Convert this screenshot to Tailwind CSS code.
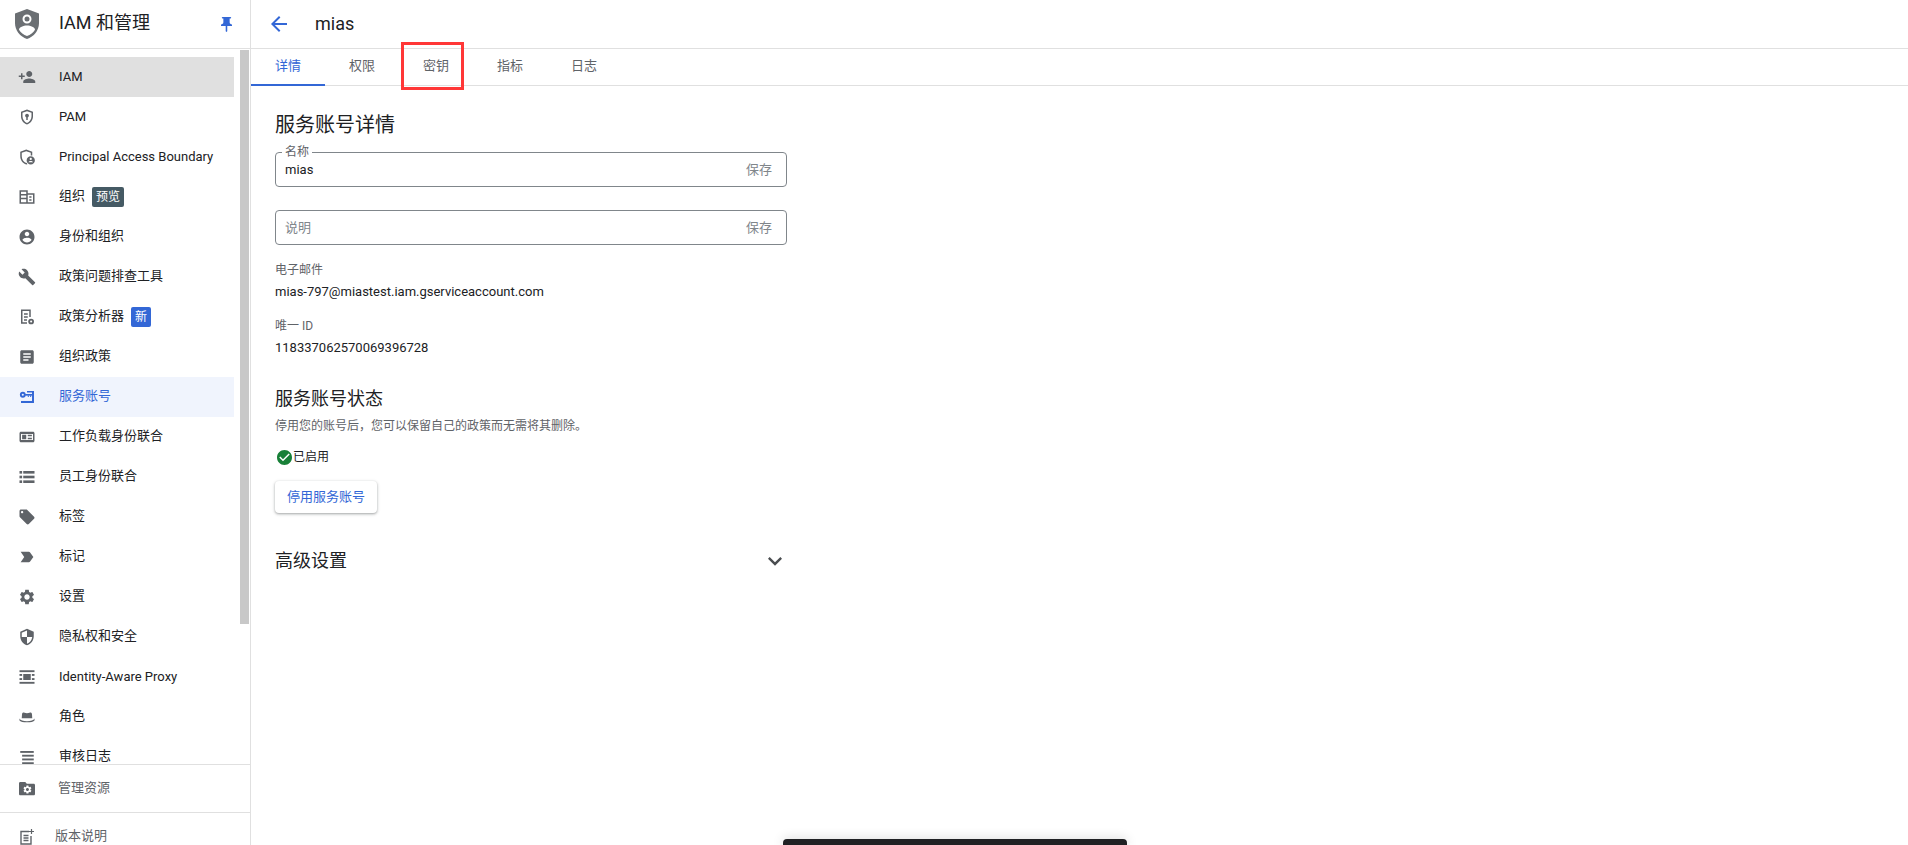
<!DOCTYPE html>
<html lang="zh-CN">
<head>
    <meta charset="UTF-8">
    <meta name="viewport" content="width=device-width, initial-scale=1.0">
    <title>IAM 和管理</title>
    <script src="https://cdn.jsdelivr.net/npm/@tailwindcss/browser@4"></script>
</head>
<body class="bg-white text-[#202124] text-[13px] font-[family-name:Roboto,'Noto_Sans_CJK_SC',sans-serif]">
<div class="relative flex h-[845px] w-[1908px] overflow-hidden">

    <!-- sidebar -->
    <aside class="flex h-full w-[251px] shrink-0 flex-col border-r border-[#e0e0e0]">
        <div class="flex h-[49px] shrink-0 items-center border-b border-[#e0e0e0] pl-[15px]">
            <svg class="h-[30px] w-[24px]" viewBox="0 0 24 30">
                <path fill="#6b6f73" d="M12 0 0 4.5v9.6C0 21.6 5.1 27.9 12 30c6.900-2.100 12-8.400 12-15.900V4.500L12 0z"/>
                <path fill="#fff" d="M12 5.500a4.500 4.500 0 1 1 0 9 4.500 4.500 0 0 1 0-9zM12 16.500c3.500 0 8 1.700 8 4.200-1.600 2.700-4.600 5.300-8 6.300-3.400-1-6.400-3.600-8-6.300 0-2.500 4.500-4.200 8-4.200z"/>
                <path fill="#6b6f73" d="M12 7.500a2.500 2.500 0 1 1 0 5 2.500 2.500 0 0 1 0-5z"/>
            </svg>
            <span class="ml-[20px] pb-[2px] text-[18px] leading-none">IAM 和管理</span>
            <svg class="ml-auto mr-[18px] h-[15px] w-[11px]" viewBox="5 2 14 20" preserveAspectRatio="none" fill="#3367d6"><path d="M16 9V4h1c.55 0 1-.45 1-1s-.45-1-1-1H7c-.55 0-1 .45-1 1s.45 1 1 1h1v5c0 1.660-1.340 3-3 3v2h5.970v7l1 1 1-1v-7H19v-2c-1.660 0-3-1.340-3-3z"/></svg>
        </div>

        <div class="flex h-[715px] shrink-0 overflow-hidden">
            <nav id="nav" class="h-[728px] w-[234px] shrink-0 pt-2"></nav>
            <div class="ml-[6px] mt-px h-[574px] w-[9px] bg-[#c8c8c8]"></div>
        </div>

        <div class="flex h-[49px] shrink-0 items-center border-y border-[#e0e0e0] pl-[19px] text-[#5f6368]">
            <svg class="h-4 w-4" viewBox="0 0 16 16" fill="#5f6368">
                <path d="M1.300 1h5l1.500 1.700h6.900c.7 0 1.300.6 1.300 1.300v9c0 .7-.6 1.300-1.300 1.300H1.300C.6 14.300 0 13.700 0 13V2.300C0 1.600.6 1 1.300 1z"/>
                <path fill="#fff" transform="translate(3.400 3.500) scale(.42)" d="M19.140 12.940c.04-.3.06-.61.06-.94 0-.32-.02-.64-.07-.94l2.030-1.580c.18-.14.23-.41.12-.61l-1.920-3.320c-.12-.22-.37-.29-.59-.22l-2.390.96c-.5-.38-1.030-.7-1.620-.94l-.36-2.540c-.04-.24-.24-.41-.48-.41h-3.840c-.24 0-.43.17-.47.41l-.36 2.540c-.59.24-1.130.57-1.620.94l-2.390-.96c-.22-.08-.47 0-.59.22L2.740 8.870c-.12.21-.08.47.12.61l2.030 1.580c-.05.3-.09.63-.09.94s.02.64.07.94l-2.030 1.580c-.18.14-.23.41-.12.61l1.920 3.320c.12.22.37.29.59.22l2.390-.96c.5.38 1.030.7 1.620.94l.36 2.540c.05.24.24.41.48.41h3.840c.24 0 .44-.17.47-.41l.36-2.540c.59-.24 1.130-.56 1.620-.94l2.390.96c.22.08.47 0 .59-.22l1.920-3.320c.12-.22.07-.47-.12-.61l-2.010-1.580zM12 15.600c-1.980 0-3.600-1.620-3.600-3.600s1.620-3.600 3.600-3.600 3.600 1.620 3.600 3.600-1.620 3.600-3.600 3.600z"/>
            </svg>
            <span class="ml-[23px] pb-[2px]">管理资源</span>
        </div>
        <div class="flex h-[48px] shrink-0 items-center pl-[20px] text-[#5f6368]">
            <svg class="h-4 w-[14px]" viewBox="0 0 14 16" fill="none" stroke="#5f6368" stroke-width="1.400"><path d="M9 2.500H1v12.500h10V7M3.500 6.500h5M3.500 9h5M3.500 11.500h5"/><path d="M11.500 0v5M9 2.500h5" stroke-width="1.200"/></svg>
            <span class="ml-[21px] pb-[2px]">版本说明</span>
        </div>
    </aside>

    <!-- main -->
    <main class="min-w-0 flex-1">
        <div class="flex h-[49px] items-center border-b border-[#e0e0e0] pl-[16px]">
            <svg class="h-6 w-6" viewBox="0 0 24 24" fill="#3367d6"><path d="M20 11H7.830l5.590-5.590L12 4l-8 8 8 8 1.410-1.410L7.830 13H20v-2z"/></svg>
            <h1 class="ml-[24px] text-[18px] leading-none">mias</h1>
        </div>

        <div class="flex h-[37px] border-b border-[#e0e0e0] text-[#5f6368]">
            <div class="-mb-px flex h-[37px] w-[74px] items-center justify-center border-b-2 border-[#3367d6] pb-[2px] text-[#3367d6]">详情</div>
            <div class="flex w-[74px] items-center justify-center pb-[2px]">权限</div>
            <div class="relative flex w-[74px] items-center justify-center pb-[2px]">密钥
                <div class="absolute left-[2px] top-[-7px] h-[48px] w-[63px] border-[3px] border-[#ff3737]"></div>
            </div>
            <div class="flex w-[74px] items-center justify-center pb-[2px]">指标</div>
            <div class="flex w-[74px] items-center justify-center pb-[2px]">日志</div>
        </div>

        <div class="w-[536px] pl-[24px]">
            <h2 class="mt-[25px] text-[20px] leading-[28px]">服务账号详情</h2>

            <div class="relative mt-[13px] flex h-[35px] w-[512px] items-center justify-between rounded-[4px] border border-[#80868b] px-[9px] pt-[1px]">
                <span class="absolute left-[6px] top-[-7px] bg-white px-[3px] text-[12px] leading-[13px] text-[#5f6368]">名称</span>
                <span>mias</span>
                <span class="mr-[5px] text-[#80868b]">保存</span>
            </div>

            <div class="mt-[23px] flex h-[35px] w-[512px] items-center justify-between rounded-[4px] border border-[#80868b] px-[9px] pt-[1px]">
                <span class="text-[#80868b]">说明</span>
                <span class="mr-[5px] text-[#80868b]">保存</span>
            </div>

            <div class="mt-[17px] text-[12px] leading-[16px] text-[#5f6368]">电子邮件</div>
            <div class="mt-[4px] leading-[20px]">mias-797@miastest.iam.gserviceaccount.com</div>
            <div class="mt-[16px] text-[12px] leading-[16px] text-[#5f6368]">唯一 ID</div>
            <div class="mt-[4px] leading-[20px]">118337062570069396728</div>

            <h2 class="mt-[29px] text-[18px] leading-[24px]">服务账号状态</h2>
            <p class="mt-[7px] text-[12px] leading-[16px] text-[#5f6368]">停用您的账号后，您可以保留自己的政策而无需将其删除。</p>

            <div class="mt-[14px] flex h-[18px] items-center text-[12px]">
                <svg class="ml-[2px] h-[15px] w-[15px]" viewBox="2 2 20 20" fill="#188038"><path d="M12 2C6.480 2 2 6.480 2 12s4.480 10 10 10 10-4.480 10-10S17.520 2 12 2zm-2 15l-5-5 1.410-1.410L10 14.170l7.590-7.590L19 8l-9 9z"/></svg>
                <span class="ml-px">已启用</span>
            </div>

            <button class="mt-[15px] block h-[32px] w-[102px] rounded-[4px] bg-white pb-[1px] text-[#3367d6] shadow-[0_1px_2px_rgba(60,64,67,0.3),0_1px_3px_1px_rgba(60,64,67,0.15)]">停用服务账号</button>

            <div class="mt-[34px] flex h-[28px] w-[512px] items-center justify-between">
                <h2 class="text-[18px] leading-[24px]">高级设置</h2>
                <svg class="-mr-[2px] h-[28px] w-[28px]" viewBox="0 0 24 24" fill="#4a4d50"><path d="M16.590 8.590L12 13.170 7.410 8.590 6 10l6 6 6-6z"/></svg>
            </div>
        </div>
    </main>

    <!-- toast peeking at the bottom -->
    <div class="absolute bottom-0 left-[783px] h-[6px] w-[344px] rounded-t-[4px] bg-[#202124] shadow-[0_0_12px_rgba(0,0,0,0.2)]"></div>
</div>

<script>
    const icons = {
        add: '<path d="M15 12c2.210 0 4-1.790 4-4s-1.790-4-4-4-4 1.790-4 4 1.790 4 4 4zm-9-2V7H4v3H1v2h3v3h2v-3h3v-2H6zm9 4c-2.670 0-8 1.340-8 4v2h16v-2c0-2.660-5.330-4-8-4z"/>',
        pam: '<path fill-rule="evenodd" d="M12 2 4 5v6.100c0 5 3.400 9.700 8 10.900 4.600-1.200 8-5.900 8-10.900V5l-8-3zm6 9.100c0 4-2.500 7.700-6 8.800-3.500-1.100-6-4.800-6-8.800V6.400l6-2.200 6 2.200v4.700z"/><circle cx="12" cy="10" r="2.500"/><rect x="11" y="11" width="2" height="5"/>',
        pab: '<path d="M11 2 3 5v6.100c0 5 3.400 9.700 8 10.900l1.500-.5-.8-1.700-.7.200c-3.500-1.100-6-4.800-6-8.900V6.400l6-2.200 6 2.200V10h2V5l-8-3z"/><path fill-rule="evenodd" d="M17 11a5.500 5.500 0 1 0 0 11 5.500 5.500 0 0 0 0-11zm0 2a1.500 1.500 0 1 1 0 3 1.500 1.500 0 0 1 0-3zm-3 6c.3-1 1.700-1.700 3-1.700s2.700.7 3 1.700z"/>',
        org: '<path fill-rule="evenodd" d="M2 3h11v4h9v14H2V3zm2 2v3h7V5H4zm0 5v3h7v-3H4zm0 5v4h7v-4H4zm9-6v10h7V9h-7z"/><rect x="15" y="11" width="3" height="2"/><rect x="15" y="15" width="3" height="2"/>',
        person: '<path d="M12 2C6.480 2 2 6.480 2 12s4.480 10 10 10 10-4.480 10-10S17.520 2 12 2zm0 3c1.660 0 3 1.340 3 3s-1.340 3-3 3-3-1.340-3-3 1.340-3 3-3zm0 14.200c-2.500 0-4.710-1.280-6-3.220.030-1.990 4-3.080 6-3.080 1.990 0 5.970 1.090 6 3.080-1.290 1.940-3.500 3.220-6 3.220z"/>',
        wrench: '<path d="M22.700 19l-9.100-9.100c.9-2.300.4-5-1.500-6.900-2-2-5-2.400-7.400-1.300L9 6 6 9 1.600 4.700C.4 7.100.9 10.100 2.900 12.100c1.900 1.900 4.600 2.400 6.900 1.500l9.100 9.100c.4.4 1 .4 1.400 0l2.300-2.300c.5-.4.5-1.100.1-1.400z"/>',
        analyzer: '<path fill-rule="evenodd" d="M4 2h13v10h-2V4H6v15h6v2H4V2z"/><rect x="8" y="7" width="5" height="2"/><rect x="8" y="11" width="5" height="2"/><rect x="8" y="15" width="4" height="2"/><circle cx="17.500" cy="18" r="3.800"/><circle cx="17.500" cy="18" r="1.400" fill="#fff"/>',
        article: '<path d="M19 3H5c-1.100 0-2 .9-2 2v14c0 1.100.9 2 2 2h14c1.100 0 2-.9 2-2V5c0-1.100-.9-2-2-2zm-5 14H7v-2h7v2zm3-4H7v-2h10v2zm0-4H7V7h10v2z"/>',
        key: '<circle cx="6.400" cy="9" r="3.900"/><circle cx="6.400" cy="9" r="1.400" fill="#f0f4fd"/><rect x="9.500" y="8" width="9.500" height="2.200"/><rect x="13" y="10" width="1.600" height="1.800"/><rect x="16" y="10" width="1.600" height="1.800"/><rect x="12" y="4" width="9.300" height="2"/><rect x="18.700" y="4" width="2.600" height="13.500"/><rect x="4" y="17.300" width="17.300" height="2.700"/>',
        badge: '<path fill-rule="evenodd" d="M4 5h16c1.100 0 2 .9 2 2v10c0 1.100-.9 2-2 2H4c-1.100 0-2-.9-2-2V7c0-1.100.9-2 2-2zm0 3v8h16V8H4z"/><rect x="5.500" y="9" width="5.500" height="6"/><rect x="13" y="9" width="5.500" height="2"/><rect x="13" y="13" width="5.500" height="2"/>',
        list: '<rect x="2" y="4" width="3.500" height="3.500"/><rect x="7" y="4" width="15" height="3.500"/><rect x="2" y="10.250" width="3.500" height="3.500"/><rect x="7" y="10.250" width="15" height="3.500"/><rect x="2" y="16.500" width="3.500" height="3.500"/><rect x="7" y="16.500" width="15" height="3.500"/>',
        tag: '<path d="M21.410 11.580l-9-9C12.050 2.220 11.550 2 11 2H4c-1.100 0-2 .9-2 2v7c0 .55.22 1.050.59 1.420l9 9c.36.36.86.58 1.410.58.55 0 1.050-.22 1.410-.59l7-7c.37-.36.59-.86.59-1.410 0-.55-.23-1.060-.59-1.420zM5.500 7C4.670 7 4 6.330 4 5.500S4.670 4 5.500 4 7 4.670 7 5.500 6.330 7 5.500 7z"/>',
        mark: '<path d="M3.500 18.990l11 .01c.67 0 1.270-.33 1.630-.84L20.500 12l-4.370-6.160c-.36-.51-.96-.84-1.630-.84l-11 .01L8.340 12 3.500 18.990z"/>',
        gear: '<path d="M19.140 12.940c.04-.3.06-.61.06-.94 0-.32-.02-.64-.07-.94l2.030-1.580c.18-.14.23-.41.12-.61l-1.920-3.320c-.12-.22-.37-.29-.59-.22l-2.390.96c-.5-.38-1.030-.7-1.620-.94l-.36-2.540c-.04-.24-.24-.41-.48-.41h-3.840c-.24 0-.43.17-.47.41l-.36 2.540c-.59.24-1.130.57-1.620.94l-2.390-.96c-.22-.08-.47 0-.59.22L2.740 8.870c-.12.21-.08.47.12.61l2.030 1.580c-.05.3-.09.63-.09.94s.02.64.07.94l-2.030 1.580c-.18.14-.23.41-.12.61l1.920 3.320c.12.22.37.29.59.22l2.390-.96c.5.38 1.030.7 1.620.94l.36 2.540c.05.24.24.41.48.41h3.840c.24 0 .44-.17.47-.41l.36-2.540c.59-.24 1.130-.56 1.620-.94l2.390.96c.22.08.47 0 .59-.22l1.920-3.320c.12-.22.07-.47-.12-.61l-2.010-1.580zM12 15.600c-1.980 0-3.600-1.620-3.600-3.600s1.620-3.600 3.600-3.600 3.600 1.620 3.600 3.600-1.620 3.600-3.600 3.600z"/>',
        shield: '<path d="M12 1L3 5v6c0 5.550 3.840 10.740 9 12 5.160-1.260 9-6.450 9-12V5l-9-4zm0 10.990h7c-.53 4.120-3.280 7.790-7 8.940V12H5V6.300l7-3.110v8.800z"/>',
        proxy: '<rect x="2" y="3" width="20" height="2.500"/><rect x="2" y="18.500" width="20" height="2.500"/><rect x="7" y="8" width="10" height="8"/><rect x="2" y="8" width="3.500" height="2.500"/><rect x="2" y="13.500" width="3.500" height="2.500"/><rect x="18.500" y="8" width="3.500" height="2.500"/><rect x="18.500" y="13.500" width="3.500" height="2.500"/>',
        hat: '<path d="M7 6c1 0 2.200.9 5 .9S16 6 17 6c1 0 1.500 1 1.700 3l.3 4.500H5l.3-4.500C5.500 7 6 6 7 6z"/><path d="M2 14c1 2.500 5 3.500 10 3.500s9-1 10-3.500v2.500c-1 1.700-5 2.500-10 2.500S3 18.200 2 16.500V14z"/>',
        lines: '<rect x="3" y="4" width="18" height="2.500"/><rect x="5.500" y="9" width="15.500" height="2.500"/><rect x="5.500" y="14" width="15.500" height="2.500"/><rect x="5.500" y="19" width="15.500" height="2.500"/>'
    };

    const items = [
        { label: 'IAM', icon: 'add', state: 'active' },
        { label: 'PAM', icon: 'pam' },
        { label: 'Principal Access Boundary', icon: 'pab' },
        { label: '组织', icon: 'org', badge: '预览', badgeClass: 'w-[32px] bg-[#455a64]' },
        { label: '身份和组织', icon: 'person' },
        { label: '政策问题排查工具', icon: 'wrench' },
        { label: '政策分析器', icon: 'analyzer', badge: '新', badgeClass: 'w-[20px] bg-[#3367d6]' },
        { label: '组织政策', icon: 'article' },
        { label: '服务账号', icon: 'key', state: 'selected' },
        { label: '工作负载身份联合', icon: 'badge' },
        { label: '员工身份联合', icon: 'list' },
        { label: '标签', icon: 'tag' },
        { label: '标记', icon: 'mark' },
        { label: '设置', icon: 'gear' },
        { label: '隐私权和安全', icon: 'shield' },
        { label: 'Identity-Aware Proxy', icon: 'proxy' },
        { label: '角色', icon: 'hat' },
        { label: '审核日志', icon: 'lines' }
    ];

    document.getElementById('nav').innerHTML = items.map(item => {
        let rowClass = 'text-[#202124]';
        let iconFill = '#5f6368';
        if (item.state === 'active') rowClass = 'bg-[#e0e0e0] text-[#202124]';
        if (item.state === 'selected') {
            rowClass = 'bg-[#f0f4fd] text-[#3367d6]';
            iconFill = '#3367d6';
        }
        // CJK glyphs sit a pixel low in this font
        const labelClass = /^[A-Za-z]/.test(item.label) ? '' : 'pb-[2px]';
        const badge = item.badge
            ? `<span class="ml-[7px] flex h-[20px] items-center justify-center rounded-[2px] text-[12px] text-white ${item.badgeClass}">${item.badge}</span>`
            : '';
        return `
            <div class="flex h-[40px] items-center pl-[18px] ${rowClass}">
                <svg class="h-[18px] w-[18px] shrink-0" viewBox="0 0 24 24" fill="${iconFill}">${icons[item.icon]}</svg>
                <span class="ml-[23px] ${labelClass}">${item.label}</span>
                ${badge}
            </div>`;
    }).join('');
</script>
</body>
</html>
